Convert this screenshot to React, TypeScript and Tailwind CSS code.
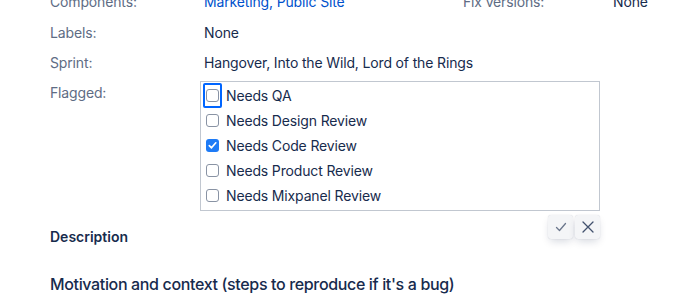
import React, { useState } from 'react';

const options = [
  'Needs QA',
  'Needs Design Review',
  'Needs Code Review',
  'Needs Product Review',
  'Needs Mixpanel Review',
];

const Row: React.FC<{ label: string; children: React.ReactNode; className?: string }> = ({
  label,
  children,
  className = '',
}) => (
  <div className={`flex leading-5 ${className}`}>
    <div className="w-[154px] shrink-0 text-[#5E6C84]">{label}</div>
    <div className="text-[#172B4D]">{children}</div>
  </div>
);

const CheckIcon = () => (
  <svg width="14" height="14" viewBox="0 0 14 14" fill="none">
    <path d="M2.5 7.5 L5.5 10.5 L11.5 3.5" stroke="#6B778C" strokeWidth="1.3" strokeLinecap="round" strokeLinejoin="round" />
  </svg>
);

const CloseIcon = () => (
  <svg width="14" height="14" viewBox="0 0 14 14" fill="none">
    <path d="M2 2 L12 12 M12 2 L2 12" stroke="#42526E" strokeWidth="1.3" strokeLinecap="round" />
  </svg>
);

export default function App() {
  const [checked, setChecked] = useState<string[]>(['Needs Code Review']);

  const toggle = (opt: string) => {
    setChecked((c) => (c.includes(opt) ? c.filter((o) => o !== opt) : [...c, opt]));
  };

  return (
    <div
      className="w-[678px] h-[296px] overflow-hidden bg-white pl-[50px] text-[14px] tracking-[-0.15px]"
      style={{ fontFamily: 'Inter, "Noto Sans", sans-serif' }}
    >
      <div className="mt-[-8px] flex leading-5">
        <div className="w-[154px] shrink-0 text-[#5E6C84]">Components:</div>
        <div className="w-[259px] shrink-0 text-[#0052CC]">Marketing, Public Site</div>
        <div className="w-[150px] shrink-0 text-[#5E6C84]">Fix versions:</div>
        <div className="text-[#172B4D]">None</div>
      </div>

      <Row label="Labels:" className="mt-[11px]">None</Row>
      <Row label="Sprint:" className="mt-[10px]">Hangover, Into the Wild, Lord of the Rings</Row>

      <div className="mt-[8px] flex">
        <div className="w-[150px] shrink-0 pt-[2px] leading-5 text-[#5E6C84]">Flagged:</div>
        <div className="relative">
          <div className="w-[400px] border border-[#C1C7D0] pt-[1px] pb-[2px] pl-[5px]">
            {options.map((opt, i) => {
              const on = checked.includes(opt);
              return (
                <label key={opt} className="flex h-[25px] items-center gap-[7px] text-[#172B4D] cursor-pointer">
                  <span className="relative flex h-[13px] w-[13px] items-center justify-center">
                    {i === 0 && (
                      <span className="absolute left-[-3px] top-[-6px] h-[25px] w-[19px] rounded-[2px] border-2 border-[#0065FF]" />
                    )}
                    <input type="checkbox" checked={on} onChange={() => toggle(opt)} className="hidden" />
                    {on ? (
                      <span className="flex h-[13px] w-[13px] items-center justify-center rounded-[3px] bg-[#1E7BF6]">
                        <svg width="9" height="9" viewBox="0 0 9 9" fill="none">
                          <path d="M1.3 4.6 L3.5 6.8 L7.8 1.8" stroke="white" strokeWidth="1.7" strokeLinecap="round" strokeLinejoin="round" />
                        </svg>
                      </span>
                    ) : (
                      <span className="h-[13px] w-[13px] rounded-[3px] border border-[#8993A4] bg-white" />
                    )}
                  </span>
                  <span>{opt}</span>
                </label>
              );
            })}
          </div>
          <div className="absolute right-0 top-full mt-[4px] flex gap-[2px]">
            <button className="flex h-[24px] w-[25px] items-center justify-center rounded-[3px] bg-[#F4F5F7] shadow-[0_4px_8px_-2px_rgba(9,30,66,0.18),0_0_1px_rgba(9,30,66,0.2)]">
              <CheckIcon />
            </button>
            <button className="flex h-[24px] w-[25px] items-center justify-center rounded-[3px] bg-[#F4F5F7] shadow-[0_4px_8px_-2px_rgba(9,30,66,0.18),0_0_1px_rgba(9,30,66,0.2)]">
              <CloseIcon />
            </button>
          </div>
        </div>
      </div>

      <div className="mt-[16px] leading-5 font-semibold tracking-normal text-[#172B4D]">Description</div>

      <div className="mt-[25px] text-[16px] leading-6 font-medium tracking-[-0.35px] text-[#172B4D]">
        Motivation and context (steps to reproduce if it's a bug)
      </div>
    </div>
  );
}
